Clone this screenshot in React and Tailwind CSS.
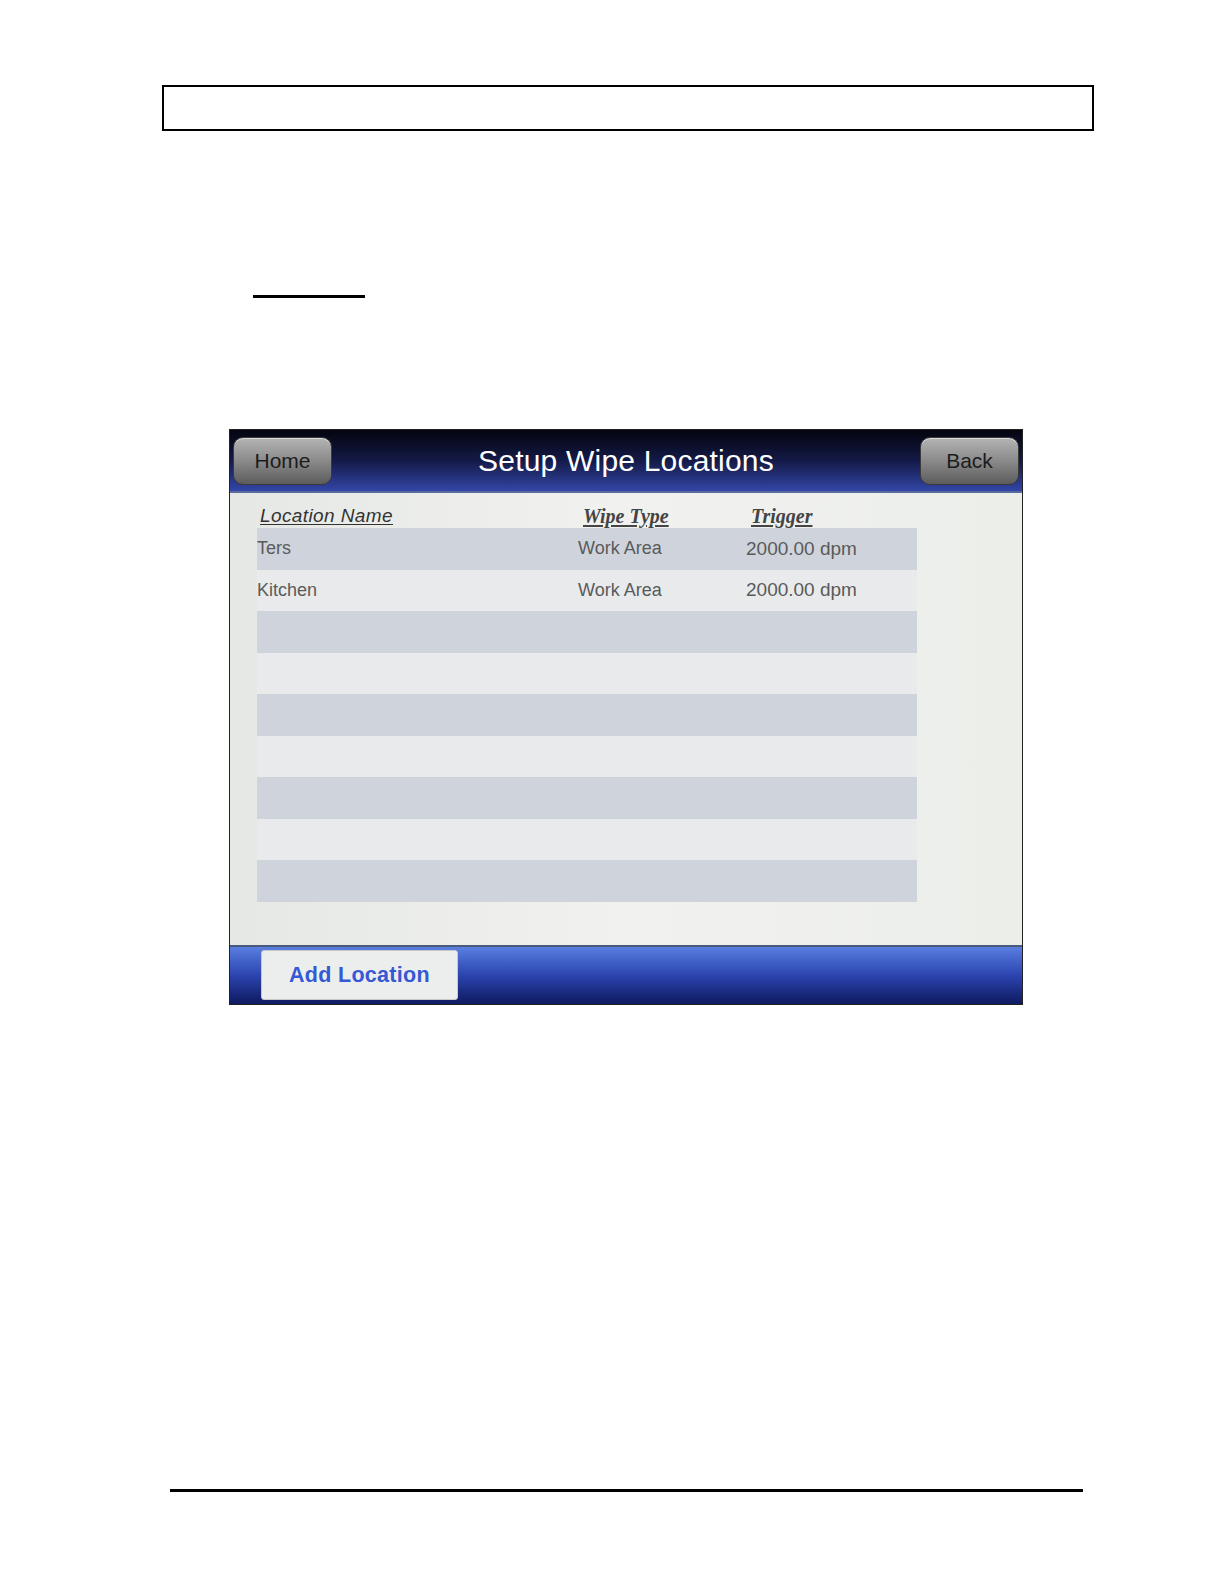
const rows = [
  { name: 'Ters', type: 'Work Area', trigger: '2000.00 dpm' },
  { name: 'Kitchen', type: 'Work Area', trigger: '2000.00 dpm' },
  {}, {}, {}, {}, {}, {}, {},
];

const GrayButton = ({ children }) => (
  <div className="w-[99px] h-[48px] rounded-[10px] border border-[#3a3a3a] bg-gradient-to-b from-[#b4b4b4] via-[#8a8a8a] to-[#5c5c5c] shadow-[inset_0_1px_0_rgba(255,255,255,0.5)] flex items-center justify-center text-[21px] text-[#1c1c1c]">
    {children}
  </div>
);

export default function App() {
  return (
    <div className="w-full bg-white flex flex-col pb-[80px] font-['Liberation_Sans',Arial,sans-serif]">
      <div className="mt-[85px] ml-[162px] w-[932px] h-[46px] border-2 border-black" />
      <div className="mt-[164px] ml-[253px] w-[112px] h-[3px] bg-black" />

      {/* touch screen capture */}
      <div className="mt-[131px] ml-[229px] w-[794px] h-[576px] flex flex-col border border-[#222]">
        <div className="h-[63px] bg-gradient-to-b from-[#05050f] via-[#141a48] to-[#3346a8] flex items-center justify-between px-[3px] border-b-2 border-[#5a6a9a]">
          <GrayButton>Home</GrayButton>
          <div className="text-white text-[30px] tracking-[0.2px]">Setup Wipe Locations</div>
          <GrayButton>Back</GrayButton>
        </div>

        <div className="flex-1 bg-gradient-to-r from-[#e6e8e6] via-[#f1f2f0] to-[#eceeea] pl-[27px] pt-[11px]">
          <div className="flex h-[24px] items-center text-[#333] italic">
            <div className="w-[326px] pl-[3px] text-[19px] underline underline-offset-2 tracking-[0.4px]">Location Name</div>
            <div className="w-[168px] text-[20px] underline underline-offset-2 font-['Liberation_Serif','Times_New_Roman',serif] font-bold text-[#444]">Wipe Type</div>
            <div className="text-[20px] underline underline-offset-2 font-['Liberation_Serif','Times_New_Roman',serif] font-bold text-[#444]">Trigger</div>
          </div>
          <div className="w-[660px] flex flex-col">
            {rows.map((r, i) => (
              <div
                key={i}
                className={`h-[41.5px] flex items-center text-[18px] text-[#5a5a5a] ${i % 2 === 0 ? 'bg-[#cfd4dc]' : 'bg-[#e8eaec]'}`}
              >
                <div className="w-[321px]">{r.name}</div>
                <div className="w-[168px]">{r.type}</div>
                <div className="text-[19px]">{r.trigger}</div>
              </div>
            ))}
          </div>
        </div>

        <div className="h-[59px] bg-gradient-to-b from-[#5a7ee0] via-[#2c44b0] to-[#0e1a60] border-t-2 border-[#4a5a7a] pl-[31px] pt-[3px]">
          <div className="w-[197px] h-[50px] bg-[#eceeee] rounded-[3px] border border-[#c8c8c8] flex items-center justify-center text-[21.5px] font-bold text-[#3558d4] tracking-[0.3px]">
            Add Location
          </div>
        </div>
      </div>

      <div className="mt-[484px] ml-[170px] w-[913px] h-[3px] bg-black" />
    </div>
  );
}
